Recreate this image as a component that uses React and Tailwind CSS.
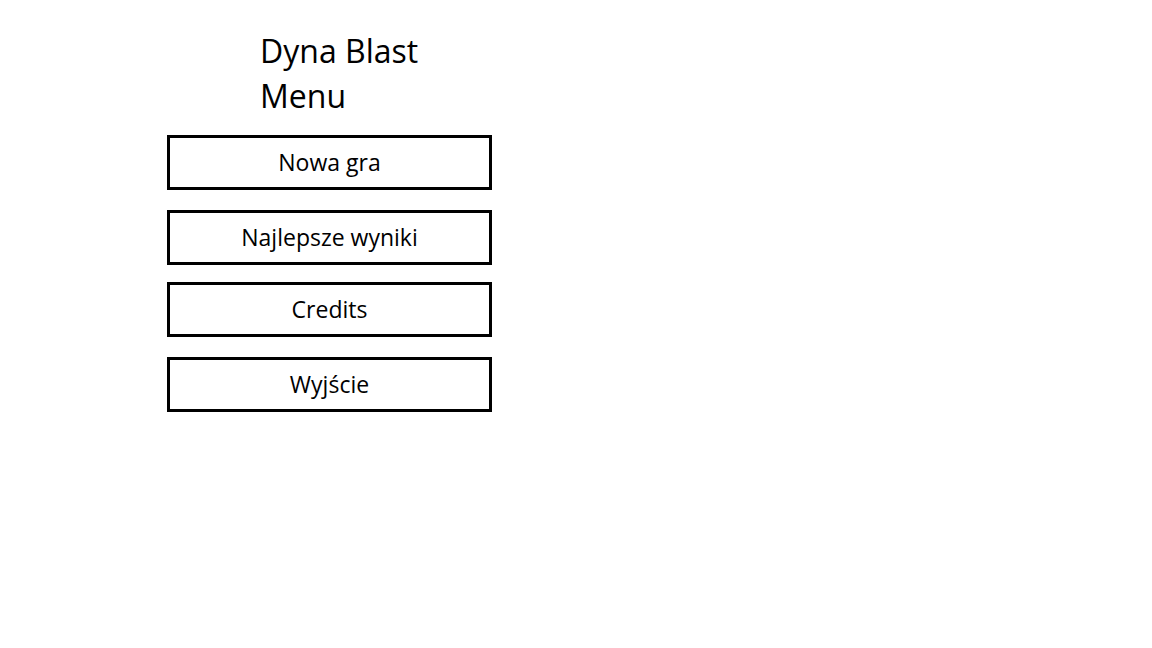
export default function App() {
  const items = [
    { label: "Nowa gra", mt: "mt-0" },
    { label: "Najlepsze wyniki", mt: "mt-[20px]" },
    { label: "Credits", mt: "mt-[17px]" },
    { label: "Wyjście", mt: "mt-[20px]" },
  ];

  return (
    <div className="w-[1152px] h-[648px] bg-white text-black font-['Open_Sans',sans-serif]">
      <div className="ml-[167px] pt-[28px] w-[325px]">
        <div className="pl-[93px] text-[32px] leading-[45px]">
          <div>Dyna Blast</div>
          <div>Menu</div>
        </div>
        <div className="mt-[17px] flex flex-col">
          {items.map((it) => (
            <button
              key={it.label}
              className={`${it.mt} h-[55px] w-full border-[3px] border-black bg-white text-[23px] flex items-center justify-center`}
            >
              {it.label}
            </button>
          ))}
        </div>
      </div>
    </div>
  );
}
